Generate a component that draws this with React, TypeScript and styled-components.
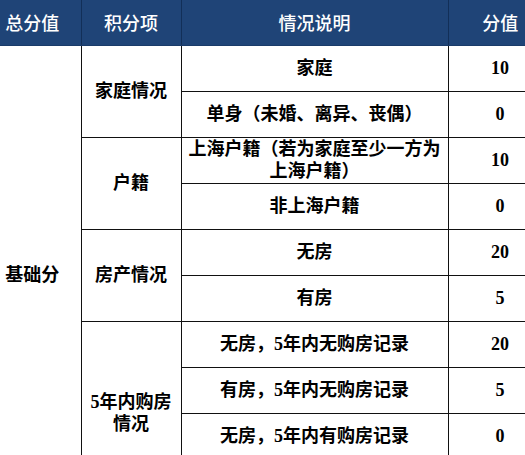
import React from "react";
import styled, { createGlobalStyle } from "styled-components";

const Global = createGlobalStyle`
  html, body {
    margin: 0;
    padding: 0;
    background: #ffffff;
    width: 525px;
    height: 455px;
    overflow: hidden;
  }
`;

const Frame = styled.div`
  width: 525px;
  height: 455px;
  overflow: hidden;
  background: #ffffff;
`;

const Table = styled.table`
  border-collapse: collapse;
  table-layout: fixed;
  width: 552px;
  font-family: "Liberation Serif", "Noto Sans CJK SC", serif;
  font-size: 18px;
  font-weight: 700;
  color: #000000;
`;

const Col = styled.col<{ $w: number }>`
  width: ${(p) => p.$w}px;
`;

const HeadRow = styled.tr`
  height: 45px;
`;

const HeadCell = styled.th<{ $lead?: boolean }>`
  background: #1f4477;
  color: #ffffff;
  font-family: "Noto Sans CJK SC", sans-serif;
  font-weight: 500;
  font-size: 18px;
  text-align: center;
  vertical-align: middle;
  padding: ${(p) => (p.$lead ? "0 16px 0 0" : "0")};
  border-left: ${(p) => (p.$lead ? "none" : "1px solid #122f58")};
  border-bottom: 1px solid #1a3b69;
  border-top: none;
`;

const Row = styled.tr`
  height: 46px;
`;

const Cell = styled.td<{ $lead?: boolean }>`
  border: 1px solid #111111;
  border-left: ${(p) => (p.$lead ? "none" : "1px solid #111111")};
  text-align: center;
  vertical-align: middle;
  line-height: 22px;
  padding: ${(p) => (p.$lead ? "0 16px 0 0" : "0 6px")};
  word-break: break-all;
`;

type Item = { desc: string; score: string };
type Group = { name: string; items: Item[] };

const groups: Group[] = [
  {
    name: "家庭情况",
    items: [
      { desc: "家庭", score: "10" },
      { desc: "单身（未婚、离异、丧偶）", score: "0" },
    ],
  },
  {
    name: "户籍",
    items: [
      { desc: "上海户籍（若为家庭至少一方为上海户籍）", score: "10" },
      { desc: "非上海户籍", score: "0" },
    ],
  },
  {
    name: "房产情况",
    items: [
      { desc: "无房", score: "20" },
      { desc: "有房", score: "5" },
    ],
  },
  {
    name: "5年内购房情况",
    items: [
      { desc: "无房，5年内无购房记录", score: "20" },
      { desc: "有房，5年内无购房记录", score: "5" },
      { desc: "无房，5年内有购房记录", score: "0" },
      { desc: "", score: "" },
    ],
  },
];

const totalRows = groups.reduce((n, g) => n + g.items.length, 0);

export default function App() {
  return (
    <Frame>
      <Global />
      <Table>
        <colgroup>
          <Col $w={81} />
          <Col $w={100} />
          <Col $w={267} />
          <Col $w={104} />
        </colgroup>
        <thead>
          <HeadRow>
            <HeadCell $lead>总分值</HeadCell>
            <HeadCell>积分项</HeadCell>
            <HeadCell>情况说明</HeadCell>
            <HeadCell>分值</HeadCell>
          </HeadRow>
        </thead>
        <tbody>
          {groups.map((g, gi) =>
            g.items.map((it, ii) => (
              <Row key={`${gi}-${ii}`}>
                {gi === 0 && ii === 0 && (
                  <Cell $lead rowSpan={totalRows}>
                    基础分
                  </Cell>
                )}
                {ii === 0 && <Cell rowSpan={g.items.length}>{g.name}</Cell>}
                <Cell>{it.desc}</Cell>
                <Cell>{it.score}</Cell>
              </Row>
            ))
          )}
        </tbody>
      </Table>
    </Frame>
  );
}
